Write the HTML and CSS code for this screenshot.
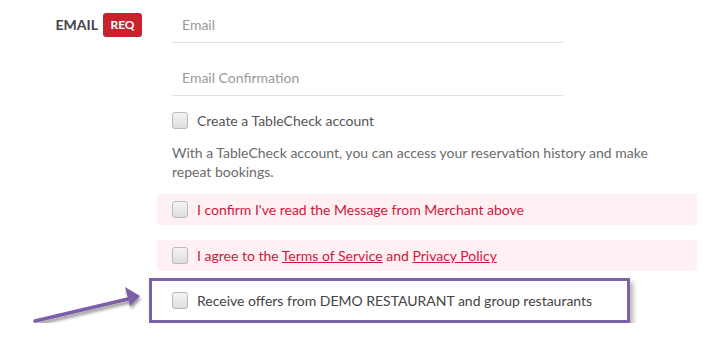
FILE: index.html
```html
<!DOCTYPE html>
<html lang="en">
<head>
  <meta charset="UTF-8" />
  <title>Reservation - Contact</title>
  <link rel="stylesheet" href="styles.css">
</head>
<body>
  <div class="form-row">
    <div class="label-col">
      <span class="label">EMAIL</span>
      <span class="req">REQ</span>
    </div>
    <div class="field-col">
      <input type="text" class="text-input" placeholder="Email">
      <input type="text" class="text-input second" placeholder="Email Confirmation">

      <label class="check-row account">
        <input type="checkbox" class="box">
        <span>Create a TableCheck account</span>
      </label>
      <p class="hint">With a TableCheck account, you can access your reservation history and make repeat bookings.</p>

      <label class="check-row alert">
        <input type="checkbox" class="box">
        <span>I confirm I've read the Message from Merchant above</span>
      </label>
      <label class="check-row alert">
        <input type="checkbox" class="box">
        <span>I agree to the <a href="#">Terms of Service</a> and <a href="#">Privacy Policy</a></span>
      </label>

      <label class="check-row highlight">
        <input type="checkbox" class="box">
        <span>Receive offers from DEMO RESTAURANT and group restaurants</span>
      </label>
    </div>
  </div>

  <!-- annotation arrow pointing at the offers checkbox -->
  <svg class="arrow" width="130" height="50" viewBox="0 0 130 50">
    <defs>
      <filter id="shade" x="-20%" y="-50%" width="140%" height="200%">
        <feDropShadow dx="1" dy="3" stdDeviation="1.5" flood-color="#000" flood-opacity="0.4"/>
      </filter>
    </defs>
    <g filter="url(#shade)">
      <line x1="15" y1="41" x2="108" y2="19" stroke="#7b5ea7" stroke-width="3.5" stroke-linecap="round"/>
      <polygon points="105,7 120,16 110,26" fill="#7b5ea7"/>
    </g>
  </svg>
</body>
</html>
```

FILE: styles.css
```css
body {
  margin: 0;
  font-family: Lato, "Open Sans", sans-serif;
  font-size: 14px;
  color: #555;
  background: #fff;
  position: relative;
}
.form-row {
  display: flex;
}
.label-col {
  width: 142px;
  padding-right: 15px;
  padding-top: 13px;
  display: flex;
  justify-content: flex-end;
  align-items: flex-start;
  gap: 5px;
}
.label {
  font-weight: 700;
  color: #444;
  line-height: 24px;
}
.req {
  background: #c8232c;
  color: #fff;
  font-weight: 700;
  font-size: 12px;
  line-height: 24px;
  width: 39px;
  text-align: center;
  border-radius: 3px;
}
.field-col {
  width: 540px;
  display: flex;
  flex-direction: column;
}
.text-input {
  margin: 6px 0 0 15px;
  width: 391px;
  height: 37px;
  box-sizing: border-box;
  border: none;
  border-bottom: 1px solid #e2e2e2;
  padding: 0 10px;
  font-family: inherit;
  font-size: 14px;
  outline: none;
}
.text-input::placeholder {
  color: #9a9a9a;
}
.text-input.second {
  margin-top: 16px;
}
.check-row {
  display: flex;
  align-items: center;
  gap: 9px;
}
.box {
  appearance: none;
  margin: 0;
  width: 16px;
  height: 17px;
  border: 1px solid #b9b9b9;
  border-radius: 3px;
  background: linear-gradient(#f4f4f4, #dedede);
  flex: none;
}
.account {
  margin: 16px 0 0 15px;
  height: 17px;
  color: #555;
}
.hint {
  margin: 14px 0 0 15px;
  line-height: 19px;
  color: #6b6b6b;
  width: 500px;
}
.alert {
  background: #fff0f3;
  border-radius: 4px;
  height: 31px;
  padding-left: 15px;
  color: #d0163a;
  margin-top: 13px;
}
.alert + .alert {
  margin-top: 15px;
}
.alert a {
  color: #d0163a;
}
.highlight {
  margin: 7px 0 0 -8px;
  width: 481px;
  height: 45px;
  box-sizing: border-box;
  border: 3px solid #7d62a3;
  padding-left: 20px;
  color: #444;
  box-shadow: 3px 4px 5px rgba(0, 0, 0, 0.3);
}
.arrow {
  position: absolute;
  left: 20px;
  top: 280px;
}
```
